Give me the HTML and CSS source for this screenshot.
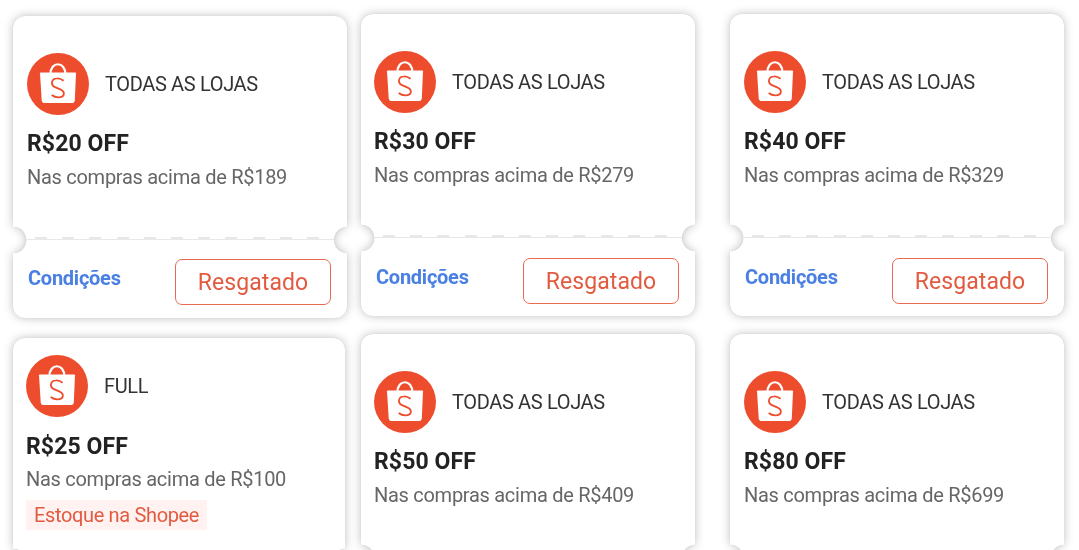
FILE: index.html
```html
<!DOCTYPE html>
<html lang="pt-BR">
<head>
  <meta charset="UTF-8" />
  <meta name="viewport" content="width=device-width, initial-scale=1.0"/>
  <title>Cupons</title>
  <link rel="stylesheet" href="styles.css">
</head>
<body>

<svg class="sprite" width="0" height="0">
  <symbol id="bag" viewBox="0 0 62 62">
    <circle cx="31" cy="31" r="31" fill="#ee4d2d"/>
    <path d="M23.4 21.5C23.4 7.8 38.4 7.8 38.4 21.5" fill="none" stroke="#fff" stroke-width="2.2"/>
    <path d="M13.8 19.5H48.2Q49 19.5 49 20.3L47.8 47.2Q47.5 50 44.9 50H17.6Q15 50 14.7 47.2L13 20.3Q13 19.5 13.8 19.5Z" fill="#fff"/>
    <path d="M36.6 27.8C34 25.7 31.5 25.2 29.8 25.4C24.2 25.8 23.3 32 28 34.1L33.2 36.3C38.9 38.8 37.6 44.2 31.7 44.3C29.3 44.4 26.7 43.6 24.7 42" fill="none" stroke="#ee4d2d" stroke-width="1.8"/>
  </symbol>
</svg>

<main class="coupons">

  <div class="column first">
    <article class="coupon">
      <div class="ticket">
        <div class="info">
          <div class="store"><svg class="logo"><use href="#bag"/></svg><span>TODAS AS LOJAS</span></div>
          <h2>R$20 OFF</h2>
          <p>Nas compras acima de R$189</p>
        </div>
        <div class="cut"></div>
        <div class="actions">
          <a class="terms">Condições</a>
          <button class="redeem">Resgatado</button>
        </div>
      </div>
    </article>

    <article class="coupon full">
      <div class="ticket">
        <div class="info">
          <div class="store"><svg class="logo"><use href="#bag"/></svg><span>FULL</span></div>
          <h2>R$25 OFF</h2>
          <p>Nas compras acima de R$100</p>
          <span class="tag">Estoque na Shopee</span>
        </div>
      </div>
    </article>
  </div>

  <div class="column">
    <article class="coupon">
      <div class="ticket">
        <div class="info">
          <div class="store"><svg class="logo"><use href="#bag"/></svg><span>TODAS AS LOJAS</span></div>
          <h2>R$30 OFF</h2>
          <p>Nas compras acima de R$279</p>
        </div>
        <div class="cut"></div>
        <div class="actions">
          <a class="terms">Condições</a>
          <button class="redeem">Resgatado</button>
        </div>
      </div>
    </article>

    <article class="coupon">
      <div class="ticket">
        <div class="info">
          <div class="store"><svg class="logo"><use href="#bag"/></svg><span>TODAS AS LOJAS</span></div>
          <h2>R$50 OFF</h2>
          <p>Nas compras acima de R$409</p>
        </div>
      </div>
    </article>
  </div>

  <div class="column last">
    <article class="coupon">
      <div class="ticket">
        <div class="info">
          <div class="store"><svg class="logo"><use href="#bag"/></svg><span>TODAS AS LOJAS</span></div>
          <h2>R$40 OFF</h2>
          <p>Nas compras acima de R$329</p>
        </div>
        <div class="cut"></div>
        <div class="actions">
          <a class="terms">Condições</a>
          <button class="redeem">Resgatado</button>
        </div>
      </div>
    </article>

    <article class="coupon">
      <div class="ticket">
        <div class="info">
          <div class="store"><svg class="logo"><use href="#bag"/></svg><span>TODAS AS LOJAS</span></div>
          <h2>R$80 OFF</h2>
          <p>Nas compras acima de R$699</p>
        </div>
      </div>
    </article>
  </div>

</main>

</body>
</html>
```
FILE: styles.css
```css
* {
  box-sizing: border-box;
}

body {
  margin: 0;
  background-color: #ffffff;
  font-family: Roboto, sans-serif;
}

.sprite {
  display: block;
}

.coupons {
  display: flex;
  align-items: flex-start;
  height: 550px;
  overflow: hidden;
  padding: 14px 0 0 13px;
}

.column {
  display: flex;
  flex-direction: column;
  flex-shrink: 0;
  gap: 18px;
  width: 334px;
  margin-left: 14px;
}

.column.first {
  gap: 20px;
  margin-left: 0;
  padding-top: 2px;
}

.column.last {
  margin-left: 35px;
}

/* the shadow follows the notched outline of the ticket */
.coupon {
  filter: drop-shadow(0 0 1px rgba(0, 0, 0, 0.04)) drop-shadow(0 0 5px rgba(0, 0, 0, 0.25));
}

.ticket {
  height: 302px;
  border-radius: 12px;
  background-color: #ffffff;
  -webkit-mask:
    radial-gradient(circle at 0 224px, transparent 13px, #000 13.8px) left / 51% 100% no-repeat,
    radial-gradient(circle at 100% 224px, transparent 13px, #000 13.8px) right / 51% 100% no-repeat;
}

.info {
  height: 221px;
  padding: 37px 13px 0;
}

.first .info,
.last .info {
  padding-left: 14px;
}

.store {
  display: flex;
  align-items: center;
  gap: 16px;
  color: #333333;
  font-size: 20px;
  letter-spacing: -0.35px;
}

.logo {
  width: 62px;
  height: 62px;
}

.info h2 {
  margin: 15px 0 0;
  color: #222222;
  font-size: 23px;
  font-weight: 700;
  letter-spacing: 0.1px;
  line-height: 28px;
}

.info p {
  margin: 7px 0 0;
  color: #666666;
  font-size: 20px;
  letter-spacing: -0.28px;
  line-height: 24px;
}

.cut {
  height: 3px;
  margin: 0 12px 0 14px;
  border-bottom: 1px solid #e8e8e8;
  background: repeating-linear-gradient(90deg, transparent 0 8px, #e8e8e8 8px 20px, transparent 20px 27.2px);
}

.actions {
  display: flex;
  justify-content: space-between;
  padding: 20px 16px 0 15px;
}

.first .actions {
  padding-top: 19px;
}

.terms {
  padding-top: 7px;
  color: #4a80e4;
  font-size: 20px;
  font-weight: 700;
  letter-spacing: -0.25px;
  line-height: 24px;
}

.redeem {
  width: 156px;
  height: 46px;
  padding: 0;
  border: 1px solid #e86a52;
  border-radius: 7px;
  background: #ffffff;
  color: #e25b40;
  font-family: inherit;
  font-size: 23px;
  letter-spacing: 0.1px;
}

.full .ticket {
  width: 332px;
}

.full .info {
  padding: 17px 13px 0;
}

.full h2 {
  margin-top: 16px;
}

.full p {
  margin-top: 6px;
}

.tag {
  display: inline-block;
  margin-top: 9px;
  padding: 0 8px;
  background-color: #fff2f0;
  color: #e25b40;
  font-size: 20px;
  letter-spacing: -0.35px;
  line-height: 30px;
}
```
